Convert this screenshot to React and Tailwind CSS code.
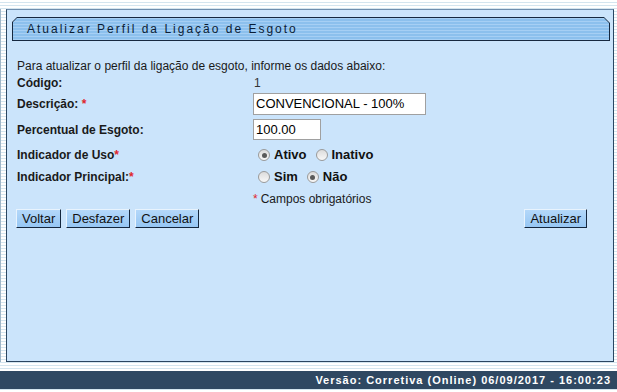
const stripes =
  "bg-[repeating-linear-gradient(to_bottom,#ffffff_0px,#ffffff_2px,#d4e5ef_2px,#d4e5ef_3px)]";

function Radio({ checked }) {
  return (
    <span className="flex h-[12px] w-[12px] shrink-0 items-center justify-center rounded-full border border-[#9a9a9a] bg-[linear-gradient(to_bottom,#dcdcdc,#f8f8f8)]">
      {checked && <span className="h-[5px] w-[5px] rounded-full bg-[#5a5a5a]" />}
    </span>
  );
}

function RadioOption({ checked, label }) {
  return (
    <span className="mr-[9px] flex items-center gap-[4px]">
      <Radio checked={checked} />
      <span className="text-[13px] font-bold text-[#111]">{label}</span>
    </span>
  );
}

function Button({ children }) {
  return (
    <button className="h-[19px] border border-t-[#e8f3fd] border-l-[#e8f3fd] border-r-[#14263d] border-b-[#14263d] bg-[linear-gradient(to_bottom,#b4d8fa,#96c6f3)] px-[5px] text-[13px] leading-[15px] text-[#111]">
      {children}
    </button>
  );
}

function Row({ label, required, h, children }) {
  return (
    <div className={`flex items-center ${h}`}>
      <div className="w-[236px] text-[12px] font-bold text-[#1a1a1a]">
        {label}
        {required && <span className="text-[#e0262b]">{required}</span>}
      </div>
      <div className="flex items-center">{children}</div>
    </div>
  );
}

export default function App() {
  return (
    <div
      className={`flex h-[392px] w-[617px] flex-col overflow-hidden font-['Liberation_Sans',Arial,sans-serif] ${stripes}`}
    >
      <div className="h-[9px]" />
      <div className="flex h-[353px]">
        <div className="w-[6px] border-l border-[#9fb6c8]" />
        <div className="flex w-[608px] flex-col border border-[#2b4661] border-t-[#6f8eae] bg-[#cbe4fb]">
          {/* cabeçalho */}
          <div className="mt-[7px] ml-[5px] mr-[3px] h-[24px] bg-[#16283f] [clip-path:polygon(5px_0,calc(100%_-_6px)_0,100%_6px,100%_100%,0_100%,0_5px)]">
            <div className="m-[1px] flex h-[22px] items-center bg-[repeating-linear-gradient(to_bottom,#a6cff4_0px,#a6cff4_1px,#8cc0ed_1px,#8cc0ed_3px)] pl-[14px] text-[12px] tracking-[2px] text-[#0b1d36] [clip-path:polygon(4px_0,calc(100%_-_5px)_0,100%_5px,100%_100%,0_100%,0_4px)]">
              Atualizar Perfil da Ligação de Esgoto
            </div>
          </div>

          {/* formulário */}
          <div className="mt-[18px] flex flex-col pl-[10px]">
            <div className="h-[14px] text-[12px] leading-[14px] text-[#1a1a1a]">
              Para atualizar o perfil da ligação de esgoto, informe os dados abaixo:
            </div>
            <Row label="Código:" h="h-[20px]">
              <span className="pl-[1px] text-[12px] text-[#333]">1</span>
            </Row>
            <Row label="Descrição: " required="*" h="h-[22px]">
              <div className="flex h-[22px] w-[173px] items-center border border-[#a0a0a0] bg-white pl-[2px] text-[13px] text-black">
                CONVENCIONAL - 100%
              </div>
            </Row>
            <Row label="Percentual de Esgoto:" h="h-[29px]">
              <div className="flex h-[21px] w-[68px] items-center border border-[#a0a0a0] bg-white pl-[2px] text-[13px] text-black">
                100.00
              </div>
            </Row>
            <Row label="Indicador de Uso" required="*" h="h-[22px]">
              <div className="ml-[5px] flex items-center">
                <RadioOption checked label="Ativo" />
                <RadioOption label="Inativo" />
              </div>
            </Row>
            <Row label="Indicador Principal:" required="*" h="h-[22px]">
              <div className="ml-[5px] flex items-center">
                <RadioOption label="Sim" />
                <RadioOption checked label="Não" />
              </div>
            </Row>
            <div className="flex h-[19px] items-center pt-[2px] pl-[236px] text-[12px] text-[#1a1a1a]">
              <span className="mr-[3px] text-[#e0262b]">*</span>
              Campos obrigatórios
            </div>
          </div>

          <div className="mt-[2px] flex justify-between pl-[9px] pr-[26px]">
            <div className="flex gap-[5px]">
              <Button>Voltar</Button>
              <Button>Desfazer</Button>
              <Button>Cancelar</Button>
            </div>
            <Button>Atualizar</Button>
          </div>
        </div>
      </div>
      <div className="h-[9px]" />
      <div className="flex h-[18px] items-center justify-end bg-[#2f4862] pr-[6px] text-[11px] font-bold tracking-[1px] text-white">
        Versão: Corretiva (Online) 06/09/2017 - 16:00:23
      </div>
    </div>
  );
}
